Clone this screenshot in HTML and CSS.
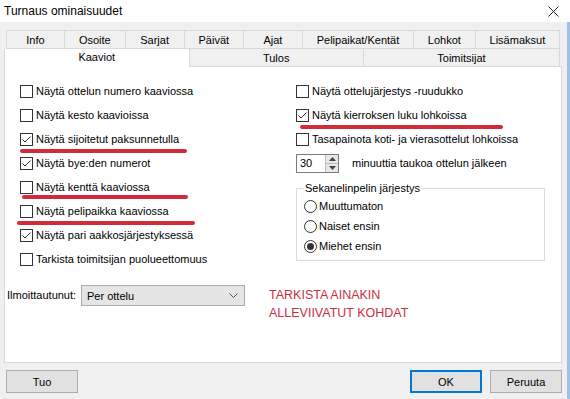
FILE: index.html
```html
<!DOCTYPE html>
<html lang="fi">
<head>
    <meta charset="UTF-8">
    <title>Turnaus ominaisuudet</title>
    <link rel="stylesheet" href="styles.css">
</head>
<body>
<div class="window">
    <div class="titlebar">
        <span>Turnaus ominaisuudet</span>
        <svg class="close" width="11" height="11" viewBox="0 0 11 11">
            <path d="M0.5 0.5 L10.5 10.5 M10.5 0.5 L0.5 10.5" stroke="#222" stroke-width="1" fill="none"/>
        </svg>
    </div>

    <div class="dialog">
        <div class="tabs">
            <div class="tab-row">
                <div class="tab">Info</div>
                <div class="tab">Osoite</div>
                <div class="tab">Sarjat</div>
                <div class="tab">Päivät</div>
                <div class="tab">Ajat</div>
                <div class="tab">Pelipaikat/Kentät</div>
                <div class="tab">Lohkot</div>
                <div class="tab">Lisämaksut</div>
            </div>
            <div class="tab-row lower">
                <div class="tab active">Kaaviot</div>
                <div class="tab">Tulos</div>
                <div class="tab">Toimitsijat</div>
            </div>
        </div>

        <div class="pane">
            <div class="columns">
                <div class="col col-left">
                    <div class="check"><span class="box"></span>Näytä ottelun numero kaaviossa</div>
                    <div class="check"><span class="box"></span>Näytä kesto kaavioissa</div>
                    <div class="check marked mark-1"><span class="box checked"><svg viewBox="0 0 11 11"><polyline points="1.5,5.5 4,8 9.5,2.5"/></svg></span>Näytä sijoitetut paksunnetulla</div>
                    <div class="check"><span class="box checked"><svg viewBox="0 0 11 11"><polyline points="1.5,5.5 4,8 9.5,2.5"/></svg></span>Näytä bye:den numerot</div>
                    <div class="check marked mark-2"><span class="box"></span>Näytä kenttä kaaviossa</div>
                    <div class="check marked mark-3"><span class="box"></span>Näytä pelipaikka kaaviossa</div>
                    <div class="check"><span class="box checked"><svg viewBox="0 0 11 11"><polyline points="1.5,5.5 4,8 9.5,2.5"/></svg></span>Näytä pari aakkosjärjestyksessä</div>
                    <div class="check"><span class="box"></span>Tarkista toimitsijan puolueettomuus</div>
                </div>

                <div class="col col-right">
                    <div class="check"><span class="box"></span>Näytä ottelujärjestys -ruudukko</div>
                    <div class="check marked mark-4"><span class="box checked"><svg viewBox="0 0 11 11"><polyline points="1.5,5.5 4,8 9.5,2.5"/></svg></span>Näytä kierroksen luku lohkoissa</div>
                    <div class="check"><span class="box"></span>Tasapainota koti- ja vierasottelut lohkoissa</div>
                    <div class="spin-row">
                        <div class="spin">
                            <span class="spin-value">30</span>
                            <span class="spin-btns">
                                <span class="spin-btn"><svg width="7" height="4" viewBox="0 0 7 4"><path d="M0 4 L3.5 0 L7 4Z" fill="#444"/></svg></span>
                                <span class="spin-btn"><svg width="7" height="4" viewBox="0 0 7 4"><path d="M0 0 L3.5 4 L7 0Z" fill="#444"/></svg></span>
                            </span>
                        </div>
                        <span class="spin-label">minuuttia taukoa ottelun jälkeen</span>
                    </div>
                    <fieldset class="group">
                        <legend>Sekanelinpelin järjestys</legend>
                        <div class="option"><span class="radio"></span>Muuttumaton</div>
                        <div class="option"><span class="radio"></span>Naiset ensin</div>
                        <div class="option"><span class="radio selected"></span>Miehet ensin</div>
                    </fieldset>
                </div>
            </div>

            <div class="footer-row">
                <span class="field-label">Ilmoittautunut:</span>
                <div class="combo">
                    <span>Per ottelu</span>
                    <svg width="9" height="5" viewBox="0 0 9 5"><polyline points="0.5,0.5 4.5,4.5 8.5,0.5" fill="none" stroke="#555"/></svg>
                </div>
                <div class="note">TARKISTA AINAKIN<br>ALLEVIIVATUT KOHDAT</div>
            </div>
        </div>

        <div class="buttons">
            <button class="btn">Tuo</button>
            <span class="spacer"></span>
            <button class="btn default">OK</button>
            <button class="btn">Peruuta</button>
        </div>
    </div>
</div>
</body>
</html>
```

FILE: styles.css
```css
body {
    margin: 0;
    font-family: "Liberation Sans", Arial, sans-serif;
    font-size: 11px;
    color: #000;
    background: #fff;
}

.window {
    width: 570px;
    height: 399px;
    display: flex;
    flex-direction: column;
}

.titlebar {
    height: 22px;
    display: flex;
    align-items: center;
    justify-content: space-between;
    padding: 0 11px 0 4px;
    background: #fff;
    font-size: 12px;
}

.dialog {
    flex: 1;
    display: flex;
    flex-direction: column;
    background: #f0f0f0;
    border-right: 3px solid #9cc0e8;
    padding: 8px 5px 6px 4px;
}

/* tabs */
.tabs {
    margin: 0 2px;
}
.tab-row {
    display: flex;
    height: 19px;
}
.tab-row.lower {
    height: 17px;
}
.tab {
    flex: 1 1 auto;
    min-width: 59px;
    padding: 0 14px;
    box-sizing: border-box;
    display: flex;
    align-items: center;
    justify-content: center;
    background: #f0f0f0;
    border: 1px solid #d9d9d9;
    border-left: none;
}
.tab:first-child {
    border-left: 1px solid #d9d9d9;
}
.lower .tab {
    border-top: none;
    border-bottom: none;
}
.tab.active {
    background: #fff;
    margin-left: -2px;
    margin-bottom: -1px;
    position: relative;
    z-index: 1;
    height: 18px;
    padding-bottom: 2px;
}

/* pane */
.pane {
    flex: 1;
    background: #fff;
    border: 1px solid #d9d9d9;
    padding: 12px 0 0 15px;
}
.columns {
    display: flex;
}
.col-left {
    width: 276px;
}
.check {
    height: 24px;
    display: flex;
    align-items: center;
    gap: 3px;
    white-space: nowrap;
}
.box {
    width: 13px;
    height: 13px;
    box-sizing: border-box;
    border: 1px solid #333;
    background: #fff;
    display: flex;
}
.box svg {
    width: 11px;
    height: 11px;
}
.box polyline {
    fill: none;
    stroke: #333;
    stroke-width: 1;
}

.marked {
    position: relative;
}
.marked::after {
    content: "";
    position: absolute;
    top: 22px;
    height: 4px;
    border-radius: 2px;
    background: #d42b3a;
}
.mark-1::after { left: 0; width: 167px; }
.mark-2::after { left: 2px; width: 166px; top: 20px; }
.mark-3::after { left: -3px; width: 178px; }
.mark-4::after { left: 4px; width: 203px; }

/* spinner */
.spin-row {
    height: 24px;
    display: flex;
    align-items: center;
}
.spin {
    display: flex;
    height: 19px;
    border: 1px solid #7a7a7a;
    box-sizing: border-box;
    background: #fff;
}
.spin-value {
    width: 28px;
    padding-left: 3px;
    box-sizing: border-box;
    display: flex;
    align-items: center;
}
.spin-btns {
    width: 12px;
    display: flex;
    flex-direction: column;
    border-left: 1px solid #bdbdbd;
}
.spin-btn {
    flex: 1;
    background: #e8e8e8;
    border-bottom: 1px solid #bdbdbd;
    display: flex;
    align-items: center;
    justify-content: center;
}
.spin-btn:last-child {
    border-bottom: none;
}
.spin-label {
    margin-left: 13px;
}

/* group box */
.group {
    margin: 6px 0 0;
    width: 249px;
    box-sizing: border-box;
    border: 1px solid #dcdcdc;
    padding: 1px 0 4px 7px;
}
.group legend {
    padding: 0 1px;
    line-height: 14px;
}
.option {
    height: 20px;
    display: flex;
    align-items: center;
    gap: 2px;
}
.radio {
    width: 13px;
    height: 13px;
    box-sizing: border-box;
    border: 1px solid #333;
    border-radius: 50%;
    background: #fff;
    display: flex;
    align-items: center;
    justify-content: center;
}
.radio.selected::after {
    content: "";
    width: 7px;
    height: 7px;
    border-radius: 50%;
    background: #333;
}

/* bottom of pane */
.footer-row {
    display: flex;
    align-items: flex-start;
    margin: 14px 0 0 -13px;
}
.field-label {
    line-height: 21px;
    width: 74px;
}
.combo {
    width: 164px;
    height: 21px;
    box-sizing: border-box;
    border: 1px solid #acacac;
    background: #e5e5e5;
    display: flex;
    align-items: center;
    justify-content: space-between;
    padding: 0 6px 0 5px;
}
.note {
    margin: 1px 0 0 24px;
    color: #c8303d;
    font-size: 12.5px;
    line-height: 18px;
}

/* dialog buttons */
.buttons {
    display: flex;
    gap: 8px;
    margin: 7px 0 0 2px;
}
.spacer {
    flex: 1;
}
.btn {
    width: 72px;
    height: 23px;
    font: inherit;
    color: #000;
    background: #e1e1e1;
    border: 1px solid #adadad;
    padding: 0;
}
.btn.default {
    border: 2px solid #0078d7;
}
```
